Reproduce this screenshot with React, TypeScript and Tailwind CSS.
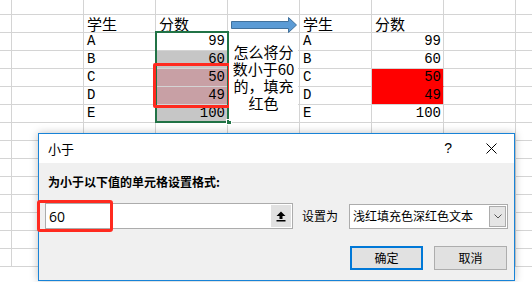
const ROWS = 15;
const COLS = 8;

const sheetFont = { fontFamily: '"Liberation Mono", "Noto Sans CJK SC", monospace' };
const cjk = { fontFamily: '"Noto Sans CJK SC", "Liberation Sans", sans-serif' };

type Cell = { text: string; align?: "left" | "right"; bg?: string; color?: string; cjk?: boolean };

// "row-col" -> content
const cells: Record<string, Cell> = {
  "1-2": { text: "学生", cjk: true },
  "1-3": { text: "分数", cjk: true },
  "2-2": { text: "A" },
  "3-2": { text: "B" },
  "4-2": { text: "C" },
  "5-2": { text: "D" },
  "6-2": { text: "E" },
  "2-3": { text: "99", align: "right" },
  "3-3": { text: "60", align: "right", bg: "bg-[#c6c6c6]" },
  "4-3": { text: "50", align: "right", bg: "bg-[#c8a0a5]", color: "text-[#9c0006]" },
  "5-3": { text: "49", align: "right", bg: "bg-[#c8a0a5]", color: "text-[#9c0006]" },
  "6-3": { text: "100", align: "right", bg: "bg-[#c6c6c6]" },
  "1-5": { text: "学生", cjk: true },
  "1-6": { text: "分数", cjk: true },
  "2-5": { text: "A" },
  "3-5": { text: "B" },
  "4-5": { text: "C" },
  "5-5": { text: "D" },
  "6-5": { text: "E" },
  "2-6": { text: "99", align: "right" },
  "3-6": { text: "60", align: "right" },
  "4-6": { text: "50", align: "right", bg: "bg-[#ff0000] !border-b-[#ff0000]", color: "text-[#8b0000]" },
  "5-6": { text: "49", align: "right", bg: "bg-[#ff0000]", color: "text-[#8b0000]" },
  "6-6": { text: "100", align: "right" },
};

function Sheet() {
  const rows = [];
  for (let r = 0; r < ROWS; r++) {
    const cols = [];
    for (let c = 1; c <= COLS; c++) {
      const cell = cells[`${r}-${c}`];
      cols.push(
        <div
          key={c}
          className={`flex w-[72px] shrink-0 items-end border-r border-b border-[#d4d4d4] leading-[17px] text-black ${
            cell?.align === "right" ? "justify-end pr-[2px]" : "pl-[3px]"
          } ${cell?.bg ?? ""} ${cell?.color ?? ""} ${cell?.cjk ? "text-[15px]" : "text-[14px]"}`}
          style={cell?.cjk ? cjk : sheetFont}
        >
          {cell?.text}
        </div>
      );
    }
    rows.push(
      <div key={r} className={`flex ${r === 0 ? "h-[15px]" : "h-[18px]"}`}>
        <div className="w-[12px] shrink-0 border-r border-b border-[#d4d4d4]" />
        {cols}
      </div>
    );
  }
  return <div className="flex flex-col bg-white">{rows}</div>;
}

function Dialog() {
  return (
    <div
      className="absolute left-[38px] top-[133px] flex h-[148px] w-[477px] flex-col border border-[#1883d7] bg-[#f0f0f0] shadow-[0_0_8px_rgba(0,0,0,0.25)]"
      style={cjk}
    >
      <div className="flex h-[29px] shrink-0 items-center bg-white pl-[9px] pr-[16px] text-[13px] text-black">
        <span className="flex-1">小于</span>
        <span className="mr-[34px] text-[14px]" style={{ fontFamily: '"Liberation Sans", sans-serif' }}>?</span>
        <svg width="11" height="11" viewBox="0 0 11 11" className="mr-[1px]">
          <path d="M0.5 0.5 L10.5 10.5 M10.5 0.5 L0.5 10.5" stroke="#000" strokeWidth="1" />
        </svg>
      </div>
      <div className="flex flex-1 flex-col px-[6px] pt-[11px]">
        <div className="pl-[3px] text-[12px] font-bold leading-[16px] text-black">为小于以下值的单元格设置格式:</div>
        <div className="mt-[13px] flex h-[26px] items-center">
          <div className="flex h-[26px] w-[248px] items-center border border-[#acacac] bg-white pr-[1px]">
            <span className="flex-1 pl-[3px] text-[14px] text-black" style={{ fontFamily: '"Open Sans", "Liberation Sans", sans-serif' }}>60</span>
            <div className="flex h-[22px] w-[20px] items-center justify-center bg-[#e1e1e1]">
              <svg width="10" height="11" viewBox="0 0 10 11">
                <path d="M5 0.5 L9.5 5 L6.5 5 L6.5 8 L3.5 8 L3.5 5 L0.5 5 Z" fill="#000" />
                <rect x="0.5" y="9" width="9" height="1.5" fill="#000" />
              </svg>
            </div>
          </div>
          <span className="ml-[9px] w-[47px] text-[12px] text-black">设置为</span>
          <div className="flex h-[25px] w-[159px] items-center border border-[#acacac] bg-white pr-[1px]">
            <span className="flex-1 pl-[3px] text-[12px] text-black">浅红填充色深红色文本</span>
            <div className="flex h-[21px] w-[17px] items-center justify-center border border-[#acacac] bg-[#e5e5e5]">
              <svg width="8" height="5" viewBox="0 0 8 5">
                <path d="M0.5 0.5 L4 4 L7.5 0.5" stroke="#555" fill="none" strokeWidth="1" />
              </svg>
            </div>
          </div>
        </div>
        <div className="mt-[17px] flex justify-end gap-[11px] pr-[1px]">
          <button className="h-[24px] w-[73px] border-2 border-[#0078d7] bg-[#e1e1e1] text-[12px] text-black">确定</button>
          <button className="h-[24px] w-[73px] border border-[#adadad] bg-[#e1e1e1] text-[12px] text-black">取消</button>
        </div>
      </div>
    </div>
  );
}

export default function App() {
  return (
    <div className="relative h-[282px] w-[532px] overflow-hidden bg-white">
      <Sheet />

      {/* selection border + fill handle */}
      <div className="absolute left-[155px] top-[31px] h-[92px] w-[74px] border-2 border-[#217346]" />
      <div className="absolute left-[226px] top-[119px] h-[6px] w-[6px] border border-white bg-[#217346]" />

      {/* red annotation around C, D */}
      <div className="absolute left-[153px] top-[63px] h-[45px] w-[78px] rounded-[2px] border-[3px] border-[#ff2a1f]" />

      {/* arrow shape */}
      <svg className="absolute left-[231px] top-[17px]" width="66" height="16" viewBox="0 0 66 16">
        <path d="M0.5 4.5 H57.5 V0.5 L65.5 8 L57.5 15.5 V11.5 H0.5 Z" fill="#5b9bd5" stroke="#41719c" strokeWidth="1" />
      </svg>

      {/* text box */}
      <div
        className="absolute left-[229px] top-[36px] flex h-[85px] w-[69px] flex-col items-center bg-white pt-[7px] text-[15px] leading-[17px] text-black"
        style={cjk}
      >
        <span>怎么将分</span>
        <span>数小于60</span>
        <span>的，填充</span>
        <span>红色</span>
      </div>

      <Dialog />

      {/* red annotation around input */}
      <div className="absolute left-[37px] top-[200px] h-[32px] w-[76px] rounded-[3px] border-[3px] border-[#ff2a1f]" />
    </div>
  );
}
